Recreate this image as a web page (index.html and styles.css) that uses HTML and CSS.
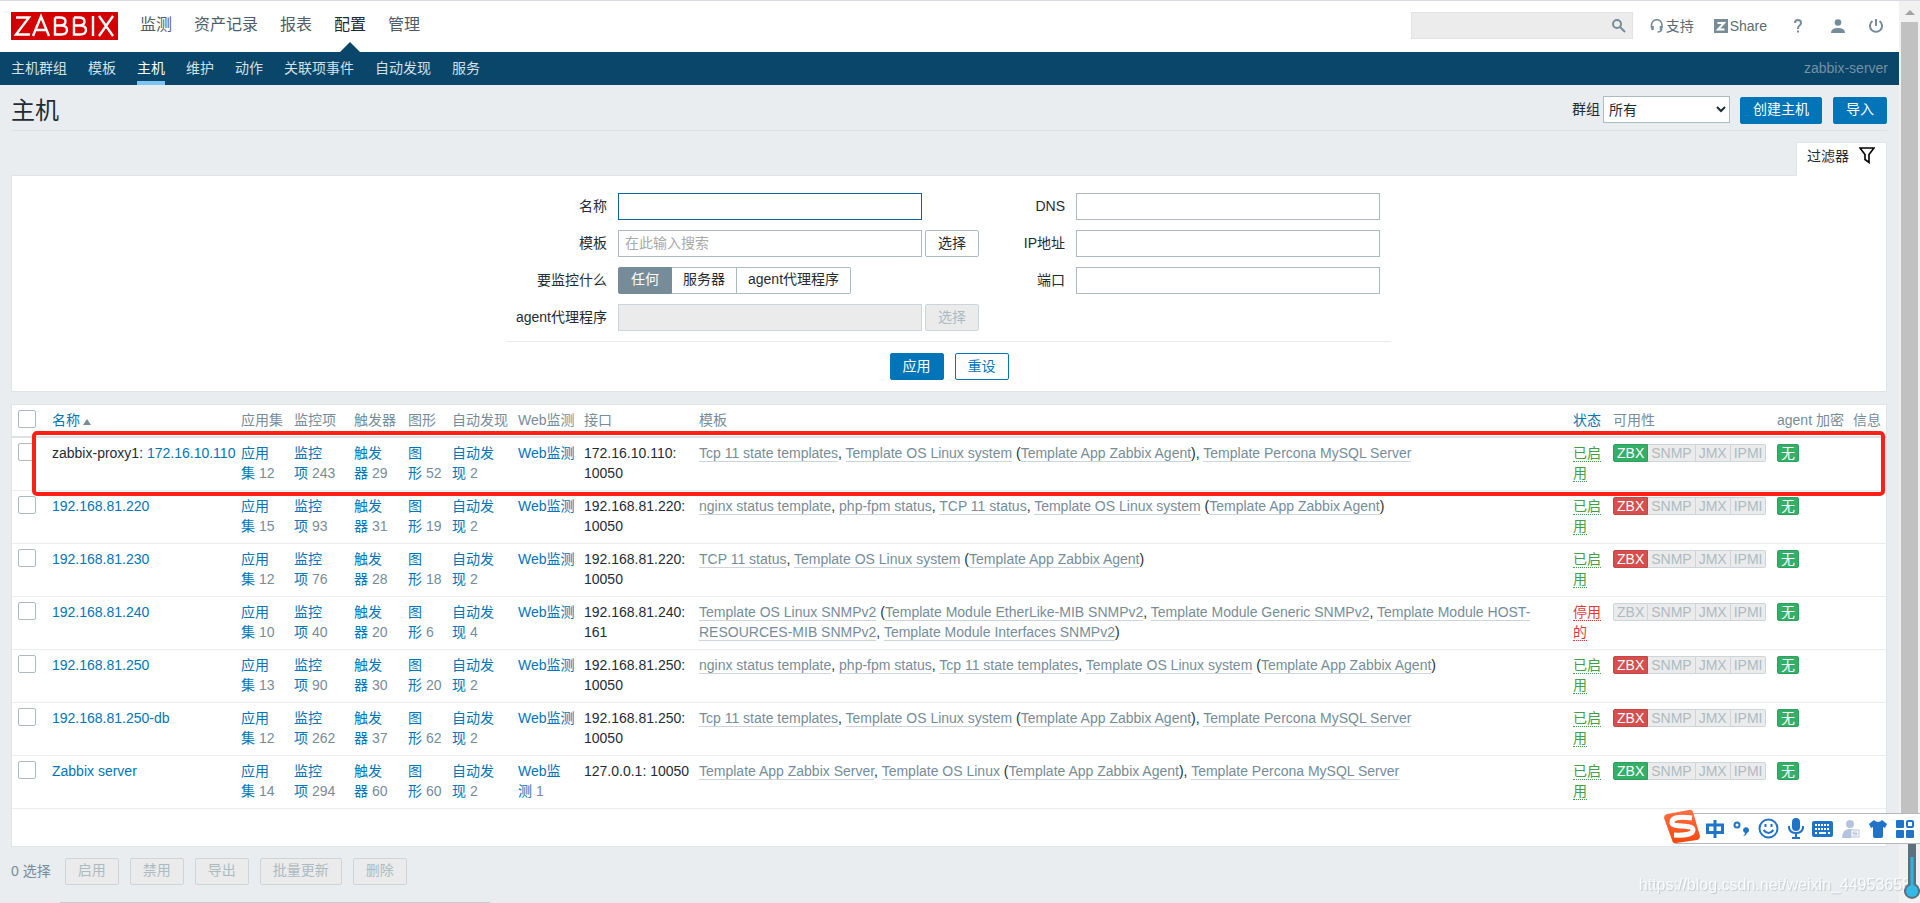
FILE: index.html
```html
<!DOCTYPE html>
<html lang="zh-CN">
<head>
<meta charset="utf-8">
<title>主机</title>
<link rel="stylesheet" href="styles.css">
</head>
<body>
<div class="page">
  <header class="top">
    <a class="logo" href="#" aria-label="ZABBIX">
      <svg width="107" height="28" viewBox="0 0 107 28" fill="none" stroke="#fff" stroke-width="2.400"><path d="M5 5.500H18L5 22.500H19M22 24L30 4.500L38 24M25 18H35M44 5.500V22.500H50Q56 22.500 56 18T50 13.500H44M44 5.500H49Q54.500 5.500 54.500 9.500T49 13.500M63 5.500V22.500H69Q75 22.500 75 18T69 13.500H63M63 5.500H68Q73.500 5.500 73.500 9.500T68 13.500M82 4V24M88 4L102 24M102 4L88 24"/></svg>
    </a>
    <nav class="main-nav">
      <a href="#">监测</a><a href="#">资产记录</a><a href="#">报表</a><a href="#" class="on">配置</a><a href="#">管理</a>
    </nav>
    <form class="search">
      <input type="text" aria-label="搜索">
      <button type="button" aria-label="搜索"><svg width="14" height="14" viewBox="0 0 14 14" fill="none" stroke="#768d99" stroke-width="2"><circle cx="5" cy="5" r="4"/><path d="M8 8L13 13"/></svg></button>
    </form>
    <div class="user">
      <a href="#"><svg width="14" height="14" viewBox="0 0 14 14" fill="none" stroke="#768d99" stroke-width="1.600"><path d="M1.500 9V6A5 5 0 0 1 12 6V9"/><path d="M2.500 7V11M11 7V11" stroke-width="2.600"/><path d="M11.500 10Q11.500 13 7.500 13"/></svg>支持</a>
      <a href="#"><svg width="14" height="14" viewBox="0 0 14 14"><path fill="#768d99" d="M0 0h14v14H0z"/><path d="M3.500 4H10L4 10.500H10.500" fill="none" stroke="#fff" stroke-width="2"/></svg>Share</a>
      <a href="#" aria-label="帮助"><svg width="8" height="14" viewBox="0 0 8 14" fill="none" stroke="#768d99" stroke-width="2"><path d="M1 4Q1 1 4 1T7 4Q7 5.500 5.500 6.500T4 10M4 11.500V13.500"/></svg></a>
      <a href="#" aria-label="用户"><svg width="14" height="14" viewBox="0 0 14 14" fill="#768d99"><circle cx="7" cy="3.500" r="3.300"/><path d="M0 14Q0 9 7 9T14 14Z"/></svg></a>
      <a href="#" aria-label="退出"><svg width="14" height="14" viewBox="0 0 14 14" fill="none" stroke="#768d99" stroke-width="2"><path d="M7 0V7M3.500 2A6 6 0 1 0 10.500 2"/></svg></a>
    </div>
  </header>
  <nav class="sub-nav">
    <a href="#">主机群组</a><a href="#">模板</a><a href="#" class="on">主机</a><a href="#">维护</a><a href="#">动作</a><a href="#">关联项事件</a><a href="#">自动发现</a><a href="#">服务</a>
    <span class="server">zabbix-server</span>
  </nav>
  <main>
    <div class="title">
      <h1>主机</h1>
      <label for="group">群组</label>
      <select id="group"><option>所有</option></select>
      <button class="btn primary">创建主机</button>
      <button class="btn primary">导入</button>
    </div>
    <div class="tabs"><a href="#">过滤器<svg width="16" height="17" viewBox="0 0 16 17" fill="none" stroke="#000" stroke-width="1.600"><path d="M1 1H15L10 7.500V15.500L6 12.500V7.500Z"/></svg></a></div>
    <form class="filter">
      <div class="cols">
        <div class="fields">
          <label for="name">名称</label><div><input id="name" class="focus" type="text"></div>
          <label for="tpl">模板</label><div><input id="tpl" type="text" placeholder="在此输入搜索"><button type="button" class="btn">选择</button></div>
          <span>要监控什么</span>
          <div class="seg">
            <input type="radio" name="mon" id="m1" checked><label for="m1">任何</label><input type="radio" name="mon" id="m2"><label for="m2">服务器</label><input type="radio" name="mon" id="m3"><label for="m3">agent代理程序</label>
          </div>
          <label for="proxy">agent代理程序</label><div><input id="proxy" type="text" disabled><button type="button" class="btn" disabled>选择</button></div>
        </div>
        <div class="fields second">
          <label for="dns">DNS</label><div><input id="dns" type="text"></div>
          <label for="ip">IP地址</label><div><input id="ip" type="text"></div>
          <label for="port">端口</label><div><input id="port" type="text"></div>
        </div>
      </div>
      <div class="actions"><button type="button" class="btn primary">应用</button><button type="button" class="btn outline">重设</button></div>
    </form>
    <div class="list">
      <div class="mark"></div>
      <table>
        <colgroup><col class="c-check"><col class="c-name"><col class="c-app"><col class="c-item"><col class="c-trig"><col class="c-graph"><col class="c-disc"><col class="c-web"><col class="c-if"><col><col class="c-stat"><col class="c-avail"><col class="c-enc"><col class="c-info"></colgroup>
        <thead><tr><th><input type="checkbox" aria-label="全选"></th><th><a href="#">名称<span class="sort"></span></a></th><th>应用集</th><th>监控项</th><th>触发器</th><th>图形</th><th>自动发现</th><th>Web监测</th><th>接口</th><th>模板</th><th><a href="#">状态</a></th><th>可用性</th><th>agent 加密</th><th>信息</th></tr></thead>
        <tbody id="rows"></tbody>
      </table>
    </div>
    <div class="footer">
      <span>0 选择</span>
      <button class="btn" disabled>启用</button><button class="btn" disabled>禁用</button><button class="btn" disabled>导出</button><button class="btn" disabled>批量更新</button><button class="btn" disabled>删除</button>
    </div>
  </main>
  <div class="bottom"></div>
</div>
<div class="scroll"><i></i><b></b></div>
<div class="watermark">https://blog.csdn.net/weixin_44953658</div>
<svg class="thermo" width="16" height="56" viewBox="0 0 16 56"><path d="M4 0H12V41A8 8 0 1 1 4 41Z" fill="#5d707e"/><path d="M8 14V46" stroke="#29b6e8" stroke-width="3"/><circle cx="8" cy="48" r="6" fill="#35b9e6"/></svg>
<div class="ime">
  <svg class="sogou" width="36" height="36" viewBox="0 0 36 36"><defs><linearGradient id="og" x2="0" y2="1"><stop stop-color="#ff7043"/><stop offset="1" stop-color="#f4480c"/></linearGradient></defs><path d="M3 5L25 1Q28 0 29 3L36 27Q36 30 33 31L12 34Q9 35 8 31L0 9Q0 6 3 5Z" fill="url(#og)"/><path d="M28 9Q7 6 8 14C9 19 29 15 29 21Q29 27 10 26" fill="none" stroke="#fff" stroke-width="5"/></svg>
  <svg width="18" height="18" viewBox="0 0 18 18" fill="none" stroke="#1f74c8" stroke-width="3"><path d="M1.500 5H16.500V12.500H1.500ZM9 0V18"/></svg>
  <svg width="16" height="18" viewBox="0 0 16 18"><circle cx="4" cy="5" r="2.500" fill="none" stroke="#1f74c8" stroke-width="2"/><path d="M10 10a3 3 0 1 1 4 3q-1 3-4 3q2-1 2-3q-2-1-2-3" fill="#1f74c8"/></svg>
  <svg width="21" height="21" viewBox="0 0 21 21" fill="none" stroke="#1f74c8" stroke-width="2"><circle cx="10.500" cy="10.500" r="9"/><path d="M7.500 6V9M13.500 6V9M5.500 12Q10.500 18 15.500 12"/></svg>
  <svg width="16" height="21" viewBox="0 0 16 21" fill="none" stroke="#1f74c8" stroke-width="2"><rect x="5" y="1" width="6" height="11" rx="3" fill="#1f74c8"/><path d="M1 8V10Q2 15 8 15T15 10V8M8 15V20M4 20H12"/></svg>
  <svg width="21" height="16" viewBox="0 0 21 16"><rect width="21" height="16" rx="2" fill="#1f74c8"/><path d="M3 4H18M3 8H18" stroke="#fff" stroke-width="2" stroke-dasharray="2 1"/><path d="M3 12H5M7 12H14M16 12H18" stroke="#fff" stroke-width="2"/></svg>
  <svg width="18" height="18" viewBox="0 0 18 18"><g fill="#b5c3dc"><circle cx="8" cy="4" r="4"/><path d="M0 18Q0 9 8 9Q12 9 13 11H9V18Z"/></g><rect x="9" y="10" width="8" height="7" fill="#fff" stroke="#b5c3dc"/><path d="M15 12H11V13.500H15V15H11" fill="none" stroke="#b5c3dc"/></svg>
  <svg width="18" height="18" viewBox="0 0 18 18" fill="#1f74c8"><path d="M5 0Q9 4 13 0L18 4L16 8L14 7V16Q14 18 12 18H6Q4 18 4 16V7L2 8L0 4Z"/></svg>
  <svg width="18" height="18" viewBox="0 0 18 18" fill="#1f74c8"><rect width="8" height="8" rx="1"/><rect y="10" width="8" height="8" rx="1"/><rect x="10" y="10" width="8" height="8" rx="1"/><rect x="11" y="1" width="6" height="6" rx="1" fill="none" stroke="#1f74c8" stroke-width="2"/></svg>
</div>
<script src="hosts.js"></script>
</body>
</html>
```

FILE: styles.css
```css
* { box-sizing: border-box; }
body { margin: 0; font: 14px/20px "Liberation Sans", "Noto Sans CJK SC", sans-serif; color: #1f2c33; background: #e9edf0; }
a { color: #0275b8; text-decoration: none; }
input, select, button { font: inherit; color: inherit; margin: 0; }
.page { padding-right: 21px; border-top: 1px solid #dadbe0; min-height: 100vh; display: flex; flex-direction: column; }
.top { height: 51px; background: #fff; display: flex; align-items: center; padding: 0 16px 2px 11px; }
.logo { background: #d40000; height: 28px; margin-right: 22px; }
.logo svg { display: block; }
.main-nav { display: flex; gap: 22px; flex: 1; align-self: stretch; }
.main-nav a { font-size: 16px; line-height: 48px; color: #4f5d66; position: relative; }
.main-nav .on { color: #1f2c33; }
.main-nav .on::after { content: ""; position: absolute; bottom: -2px; left: 6px; border: 10px solid transparent; border-top: 0; border-bottom-color: #0a466a; }
.search { display: flex; width: 222px; height: 27px; background: #ececec; border: 1px solid #e3e3e3; margin-right: 17px; }
.search input { flex: 1; min-width: 0; border: 0; background: none; }
.search button { border: 0; background: none; padding: 0 6px; }
.search svg { display: block; }
.user { display: flex; align-items: center; }
.user a { display: flex; align-items: center; gap: 2px; color: #5b6b75; margin-right: 20px; }
.user a:nth-child(2) { margin-right: 27px; }
.user a:nth-child(3) { margin-right: 29px; }
.user a:nth-child(4) { margin-right: 24px; }
.user a:last-child { margin-right: 0; }
.sub-nav { height: 33px; background: #0a466a; display: flex; gap: 21px; padding: 0 11px; }
.sub-nav a { color: #d3e0e8; line-height: 33px; }
.sub-nav .on { color: #fff; border-bottom: 4px solid #7cc5f5; }
.server { margin-left: auto; color: #7590a2; line-height: 33px; }
main { padding: 0 12px 0 11px; flex: 1; }
.title { height: 46px; display: flex; align-items: center; border-bottom: 1px solid #dce2e5; }
h1 { font-size: 24px; line-height: 28px; font-weight: 400; margin: 0 auto 0 0; padding-top: 6px; }
.title label { margin-right: 3px; padding-top: 3px; }
select { width: 127px; height: 27px; margin-top: 4px; border: 1px solid #acbbc2; background: #fff; padding: 0 1px; margin-right: 10px; }
.btn { height: 27px; border: 1px solid #acbbc2; border-radius: 2px; background: #fff; padding: 0 12px 2px; line-height: 20px; white-space: nowrap; }
.btn.primary { background: #0275b8; border-color: #0275b8; color: #fff; }
.btn.outline { border-color: #0275b8; color: #0275b8; }
.btn:disabled, input:disabled { background: #ebebeb; border-color: #ccd5d9; color: #acbbc2; }
.title .btn { margin-top: 5px; }
.title .btn + .btn { margin-left: 11px; }
.tabs { display: flex; justify-content: flex-end; padding-top: 11px; }
.tabs a { display: flex; gap: 10px; width: 91px; height: 34px; padding: 3px 10px; background: #fff; border: 1px solid #dfe4e7; border-bottom: 0; color: #1f2c33; margin-bottom: -1px; z-index: 1; }
.tabs svg { flex: none; margin-top: 1px; }
.filter { background: #fff; border: 1px solid #dfe4e7; height: 217px; padding-top: 17px; }
.cols { width: 884px; margin: 0 auto; display: flex; justify-content: space-between; padding: 0 11px 10px 1px; border-bottom: 1px solid #ebebeb; }
.fields { display: grid; grid-template-columns: 99px 1fr; column-gap: 11px; row-gap: 10px; align-items: center; align-content: start; }
.fields.second { grid-template-columns: 50px 1fr; }
.fields > label, .fields > span { text-align: right; white-space: nowrap; justify-self: end; padding-bottom: 2px; }
.fields > div { display: flex; gap: 3px; height: 27px; }
.fields input[type=text] { width: 304px; border: 1px solid #acbbc2; padding: 0 6px 2px; }
.fields input.focus { border-color: #0a659e; }
.fields input[disabled] { border-color: #ccd5d9; }
::placeholder { color: #a9a9a9; opacity: 1; }
.fields .seg { gap: 0; }
.seg input { position: absolute; opacity: 0; }
.seg label { border: 1px solid #acbbc2; border-left-width: 0; padding: 1px 11px; }
.seg input:checked + label { background: #768d99; color: #fff; border-color: #768d99; border-radius: 2px 0 0 2px; padding: 1px 12px; border-left-width: 1px; }
.seg label:last-child { border-radius: 0 2px 2px 0; }
.actions { display: flex; justify-content: center; gap: 11px; padding-top: 11px; }
.list { position: relative; background: #fff; border: 1px solid #dfe4e7; margin-top: 12px; padding-bottom: 37px; }
table { width: 100%; table-layout: fixed; border-collapse: collapse; }
.c-check { width: 34px; } .c-name { width: 189px; } .c-app { width: 53px; } .c-item { width: 60px; } .c-trig { width: 54px; } .c-graph { width: 44px; } .c-disc { width: 66px; } .c-web { width: 66px; } .c-if { width: 115px; } .c-stat { width: 40px; } .c-avail { width: 164px; } .c-enc { width: 76px; } .c-info { width: 39px; }
th { font-weight: 400; text-align: left; color: #768d99; height: 32px; border-bottom: 2px solid #dce2e4; padding: 0 0 2px 6px; white-space: nowrap; }
td { vertical-align: top; height: 53px; padding: 5px 2px 6px 6px; border-bottom: 1px solid #ebeef0; color: #768d99; }
td:nth-child(2) { white-space: nowrap; }
th:first-child { padding-bottom: 4px; }
.dark { color: #1f2c33; }
.sort { display: inline-block; border: 4px solid transparent; border-top: 0; border-bottom: 6px solid #768d99; margin-left: 3px; }
input[type=checkbox] { appearance: none; display: block; width: 18px; height: 18px; border: 1px solid #acbbc2; border-radius: 2px; background: #fff; }
td .tpl { color: #768d99; border-bottom: 1px solid #ccd5d9; }
.on-state, .off-state { border-bottom: 1px dotted; color: #429e47; }
.off-state { color: #e33734; }
.avail { display: flex; }
.avail span, .enc { height: 18px; line-height: 16px; border: 1px solid #ccd5d9; border-left-width: 0; padding: 0 3px; background: #ebebeb; color: #acbbc2; }
.avail span:first-child { border-left-width: 1px; border-radius: 2px 0 0 2px; }
.avail span:last-child { border-radius: 0 2px 2px 0; }
.avail .green, .enc { background: #34af67; border-color: #2f9f5e; color: #fff; }
.avail .red { background: #d64e4e; border-color: #c84545; color: #fff; }
.enc { display: inline-block; border-width: 1px; border-radius: 2px; vertical-align: top; }
.avail, .enc { margin-top: 1px; }
.mark { position: absolute; left: 20px; right: 1px; top: 26px; height: 65px; border: 4px solid #ff2015; border-radius: 5px; }
.footer { display: flex; align-items: center; gap: 11px; padding-top: 11px; color: #768d99; }
.footer span { margin-right: 3px; }
.bottom { height: 1px; background: linear-gradient(to right, #f6e3ec 60px, #c4c8ca 60px, #c4c8ca 490px, #f6e3ec 490px); }
.scroll { position: fixed; top: 1px; right: 0; bottom: 0; width: 21px; background: #f1f1f1; padding: 9px 2px 0; display: flex; flex-direction: column; align-items: center; gap: 7px; }
.scroll i { border: 5px solid transparent; border-top: 0; border-bottom-color: #a3a3a3; }
.scroll b { width: 17px; height: 820px; background: #c1c1c1; }
.watermark { position: fixed; right: 9px; bottom: 8px; font-size: 16px; color: #fff; text-shadow: 1px 1px 1px #b8bcc0; opacity: .8; }
.thermo { position: fixed; right: 0; bottom: 4px; }
.ime { position: fixed; right: 0; bottom: 59px; width: 245px; height: 31px; background: #fff; border: 1px solid #b4b6bc; border-right: 0; display: flex; align-items: center; justify-content: space-between; padding: 0 6px 0 0; }
.sogou { margin: 0 -3px 3px -12px; }
```

FILE: hosts.js
```js
const mysql = ", [Template Percona MySQL Server]";
const agent = " ([Template App Zabbix Agent])";
const os = "[Template OS Linux system]" + agent;
const hosts = [
  ["172.16.10.110", 12, 243, 29, 52, 2, "", "172.16.10.110: 10050", "[Tcp 11 state templates], " + os + mysql, "green"],
  ["192.168.81.220", 15, 93, 31, 19, 2, "", "192.168.81.220: 10050", "[nginx status template], [php-fpm status], [TCP 11 status], " + os, "red"],
  ["192.168.81.230", 12, 76, 28, 18, 2, "", "192.168.81.220: 10050", "[TCP 11 status], " + os, "red"],
  ["192.168.81.240", 10, 40, 20, 6, 4, "", "192.168.81.240: 161", "[Template OS Linux SNMPv2] ([Template Module EtherLike-MIB SNMPv2], [Template Module Generic SNMPv2], [Template Module HOST-RESOURCES-MIB SNMPv2], [Template Module Interfaces SNMPv2])", ""],
  ["192.168.81.250", 13, 90, 30, 20, 2, "", "192.168.81.250: 10050", "[nginx status template], [php-fpm status], [Tcp 11 state templates], " + os, "red"],
  ["192.168.81.250-db", 12, 262, 37, 62, 2, "", "192.168.81.250: 10050", "[Tcp 11 state templates], " + os + mysql, "red"],
  ["Zabbix server", 14, 294, 60, 60, 2, 1, "127.0.0.1: 10050", "[Template App Zabbix Server], [Template OS Linux]" + agent + mysql, "green"]
];
const kinds = ["应用集", "监控项", "触发器", "图形", "自动发现", "Web监测"];
document.getElementById("rows").innerHTML = hosts.map((h, n) => {
  const counts = kinds.map((k, i) => `<td><a href="#">${k}</a>${h[i + 1] === "" ? "" : "&nbsp;" + h[i + 1]}</td>`).join("");
  const templates = h[8].replace(/\[(.*?)\]/g, '<a class="tpl" href="#">$1</a>');
  const state = h[9] ? '<a href="#" class="on-state">已启用</a>' : '<a href="#" class="off-state">停用的</a>';
  return `<tr><td><input type="checkbox" aria-label="${h[0]}"></td><td class="dark">${n ? "" : "zabbix-proxy1: "}<a href="#">${h[0]}</a></td>${counts}<td class="dark">${h[7]}</td><td class="dark">${templates}</td><td>${state}</td><td><div class="avail"><span class="${h[9]}">ZBX</span><span>SNMP</span><span>JMX</span><span>IPMI</span></div></td><td><span class="enc">无</span></td><td></td></tr>`;
}).join("");
```
